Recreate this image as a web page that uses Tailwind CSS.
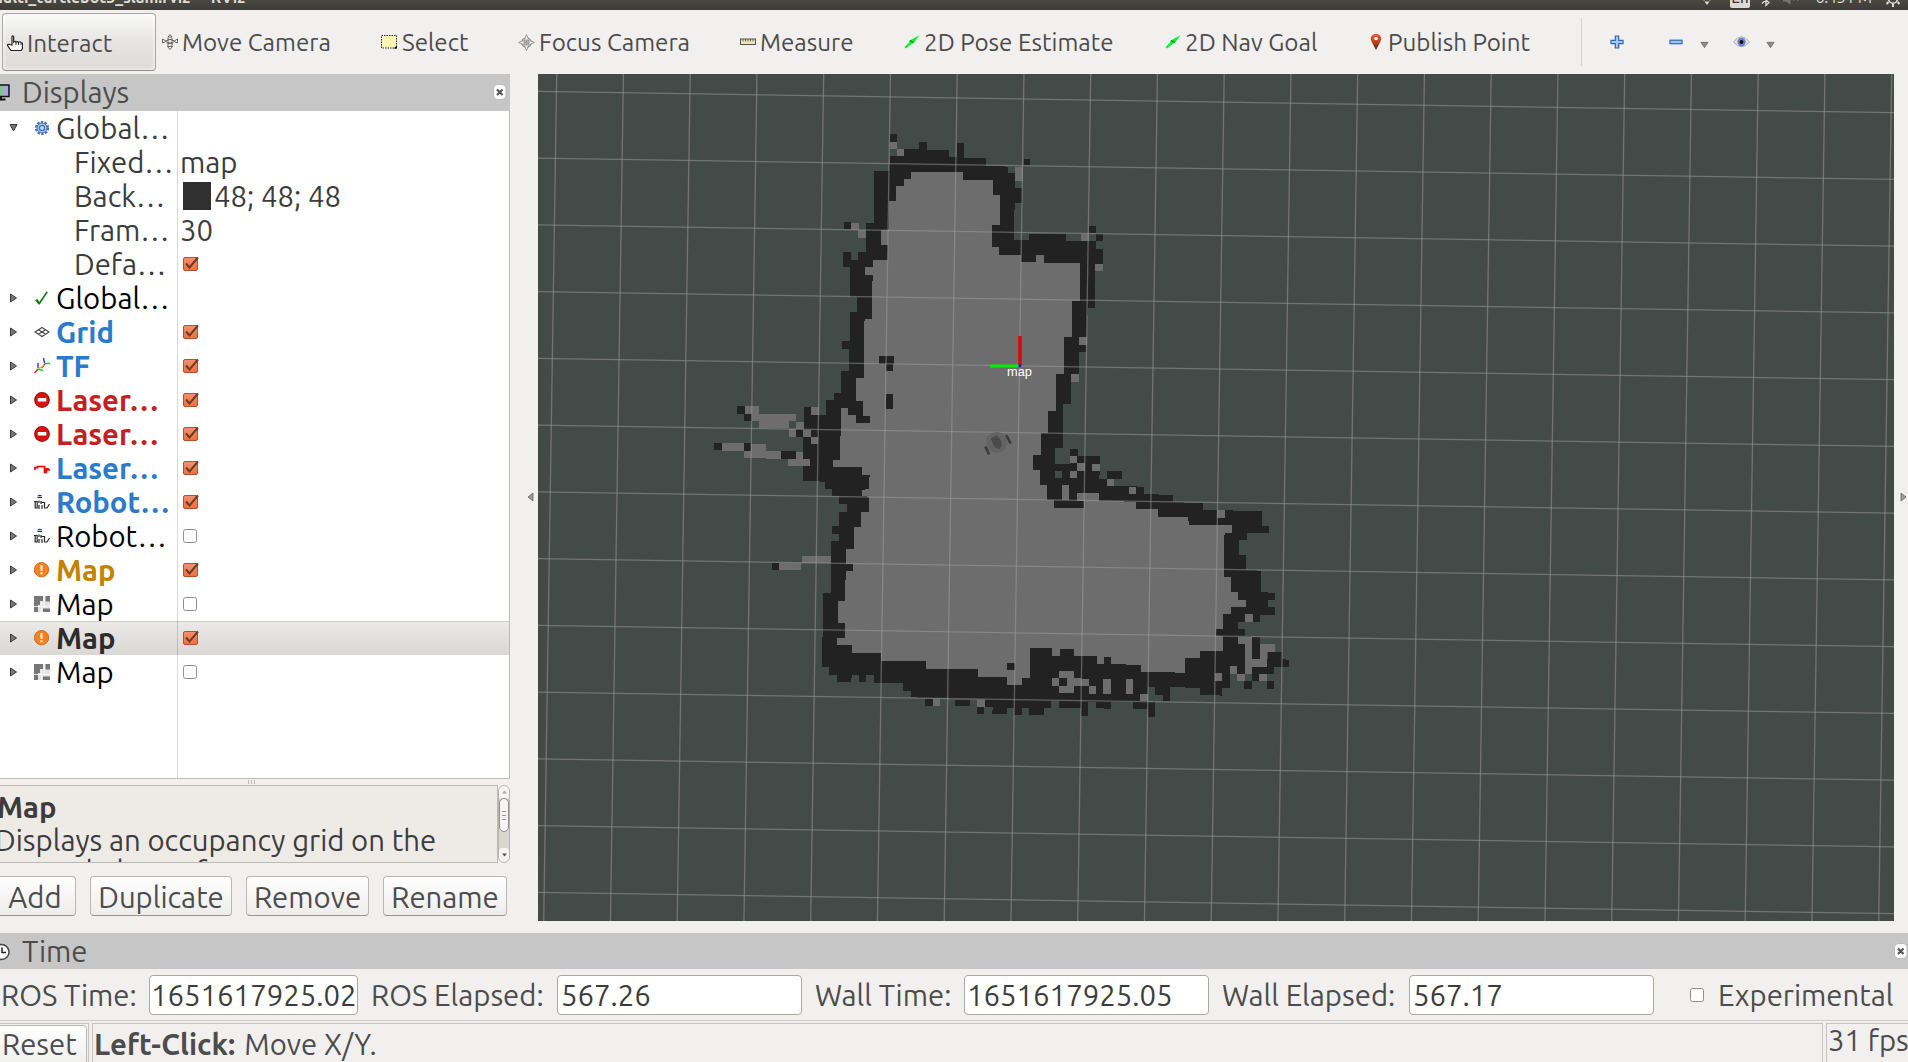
<!DOCTYPE html>
<html lang="en">
<head>
<meta charset="utf-8">
<title>RViz</title>
<script src="https://cdn.jsdelivr.net/npm/@tailwindcss/browser@4"></script>
</head>
<body class="w-[1908px] h-[1062px] overflow-hidden bg-[#f1f0ee] text-[#4c4c4c] font-['Ubuntu','Noto_Sans',sans-serif] text-[29.3px] whitespace-nowrap flex flex-col">

<svg class="absolute w-0 h-0" xmlns="http://www.w3.org/2000/svg">
  <linearGradient id="gCheck" x1="0" y1="0" x2="0" y2="1"><stop offset="0" stop-color="#f29273"/><stop offset="1" stop-color="#ee6f3c"/></linearGradient>
  <linearGradient id="gPin" x1="0" y1="0" x2="0" y2="1"><stop offset="0" stop-color="#f05a3c"/><stop offset="0.5" stop-color="#c4451c"/><stop offset="1" stop-color="#3a2412"/></linearGradient>
  <linearGradient id="gScreen" x1="0" y1="0" x2="1" y2="0"><stop offset="0.5" stop-color="#7fc97f"/><stop offset="0.8" stop-color="#a9a4ea"/></linearGradient>
  <symbol id="on" viewBox="0 0 16 16"><rect x="0.5" y="1.5" width="14" height="13" rx="1.5" fill="url(#gCheck)" stroke="#b5502c"/><path d="M3 7.5 6.5 11.5 15 1.5" fill="none" stroke="#6e3a28" stroke-width="2"/></symbol>
  <symbol id="off" viewBox="0 0 16 16"><rect x="0.5" y="1.5" width="13" height="13" rx="2" fill="#fff" stroke="#8f8f8f"/></symbol>
  <symbol id="gear" viewBox="0 0 16 16"><circle cx="8" cy="8" r="5.8" fill="none" stroke="#3f70b8" stroke-width="2.6" stroke-dasharray="2.3 1.35"/><circle cx="8" cy="8" r="5" fill="#b4cbea" stroke="#3f70b8"/><circle cx="8" cy="8" r="2.6" fill="none" stroke="#3f70b8" stroke-width="1.2"/><circle cx="8" cy="8" r="1" fill="#dfe9f6"/></symbol>
  <symbol id="tick" viewBox="0 0 16 16"><path d="M1 10 3.500 9l1.700 3L12.500 1.500 14 2 5.700 14.500H4.500Z" fill="#187a1c"/></symbol>
  <symbol id="grid" viewBox="0 0 16 16"><path d="M8 3.500 15 8l-7 4.500L1 8ZM4.500 5.800l7 4.500M11.500 5.800l-7 4.500" fill="none" stroke="#444" stroke-width="1.200"/></symbol>
  <symbol id="tf" viewBox="0 0 16 16"><path d="M4 11 0.500 15M11 6 7.500 10" stroke="#e02020" stroke-width="1.400"/><path d="M4 10V5M10.500 5 9.500 0" stroke="#3030e0" stroke-width="1.400"/><path d="M10.500 5.500H16M4 11l5 1.500" stroke="#10d820" stroke-width="1.400"/><path d="M5 10.500 10 7" stroke="#f0c020" stroke-width="1.400"/></symbol>
  <symbol id="err" viewBox="0 0 16 16"><circle cx="8" cy="8" r="7.900" fill="#8e0d0d"/><circle cx="8" cy="8" r="7" fill="#dc1010"/><rect x="3.800" y="6" width="8.500" height="3.600" rx="0.500" fill="#fff"/></symbol>
  <symbol id="laser" viewBox="0 0 16 16"><path d="M1 10V7.700H3.500V6.500H10.500V12.500H12.300V8.800H14V10H16" fill="none" stroke="#f00000" stroke-width="1.700"/></symbol>
  <symbol id="robot" viewBox="0 0 16 16"><path d="M3 2.200Q5.500-0.500 8.500 2.200Z" fill="#27388c"/><path d="M3.500 3.500H8M1.200 8V14M3.200 7V14.500M5 6.500V9M5 11V15M7 7V10M8 11V15M7.500 8.500H10.500V14H13L15.500 10M0 7.500H3M0.500 14H3" fill="none" stroke="#2a2a2a" stroke-width="1.200"/></symbol>
  <symbol id="warn" viewBox="0 0 16 16"><circle cx="7.500" cy="7.700" r="7.200" fill="#f58220" stroke="#d2691a" stroke-width="0.900"/><rect x="6.400" y="3" width="2.200" height="5.800" fill="#ffe6c8"/><rect x="6.400" y="10.200" width="2.200" height="2.200" fill="#ffe6c8"/></symbol>
  <symbol id="mapi" viewBox="0 0 16 16"><path d="M0 0H16V16H0Z" fill="#e4e4e4"/><path d="M0 0H9V5H6V9H4V16H0ZM11.500 0H16V5.500H11.500ZM9 12.500H16V16H9Z" fill="#777"/><path d="M10.200 0V12M0 10.500H16M7.500 6V16" stroke="#fff" stroke-width="0.800"/></symbol>
  <symbol id="x" viewBox="0 0 14 16"><rect x="0.500" y="0.500" width="12.500" height="15" rx="4" fill="#fbfbfb" stroke="#aaa" stroke-width="0.700"/><path d="M4 5.500 9.500 11M9.500 5.500 4 11" stroke="#555" stroke-width="2.200"/></symbol>
  <symbol id="pose" viewBox="0 0 16 16"><path d="M0.500 13.300 5.500 8 5 7 15.500 1 9.500 9.500 8 9.500 2 14.500Z" fill="#00f52c"/><path d="M6 6.500 9.500 8.500" stroke="#1c7a20" stroke-width="1.200"/></symbol>
  <symbol id="down" viewBox="0 0 10 8"><path d="M1 1H9L5 7Z" fill="#8c8c8c" stroke="#666" stroke-width="0.800"/></symbol>
</svg>

<!-- title bar -->
<header class="h-[10px] shrink-0 overflow-hidden bg-linear-to-b from-[#4a4842] to-[#3c3b37] text-[#dfdbd2] flex justify-between">
  <div class="text-[16px] font-bold leading-[20px] -mt-[13px] -ml-[11px]">multi_turtlebot3_slam.rviz* - RViz</div>
  <div class="flex items-start h-[10px] pr-[7px]">
    <svg class="w-[14px] h-[10px] mr-[16px]" viewBox="0 0 14 10"><path d="M1-3Q7-6 13-3M3.500 0Q7-2 10.500 0" stroke="#dfdbd2" fill="none" stroke-width="1.500"/><path d="M4.500 1.500 7 5 9.500 1.500Z" fill="#dfdbd2"/></svg>
    <div class="w-[20px] h-[18px] -mt-[10px] rounded-[2px] bg-[#dfdbd2] text-[#3c3b37] text-[15px] font-medium leading-[16px] text-center">En</div>
    <svg class="w-[10px] h-[10px] ml-[11px]" viewBox="0 0 10 10"><path d="M1 3.500 8-3M1-3 8 2.500 5 5.500V-8" stroke="#dfdbd2" fill="none" stroke-width="1.300"/></svg>
    <svg class="w-[16px] h-[10px] ml-[12px]" viewBox="0 0 16 10"><path d="M0-4H3L7-8V4L3 1H0ZM9-2l2 3M13-2l2 3" fill="#77756e" stroke="#77756e"/></svg>
    <div class="text-[16px] leading-[20px] -mt-[13px] ml-[16px] w-[57px] text-center tracking-[-0.300px]">6:45 PM</div>
    <svg class="w-[16px] h-[10px] ml-[13px]" viewBox="0 0 16 10"><circle cx="8" cy="-1" r="4.300" fill="none" stroke="#dfdbd2" stroke-width="1.600"/><path d="M8 3.500V7M3.500 2 1.500 4M12.500 2l2 2M13-1h2.500M0.500-1H3" stroke="#dfdbd2" stroke-width="2"/></svg>
  </div>
</header>

<!-- toolbar -->
<nav class="h-16 shrink-0 flex items-center text-[24.2px] leading-[64px]">
  <div class="ml-[2px] w-[154px] h-[58px] rounded-[4px] border border-[#a9a7a2] border-b-[#8f8d88] bg-linear-to-b from-[#fafafa] via-[#e6e5e3] to-[#dddbd8] flex items-center pl-[4px] gap-[4px] shadow-[inset_0_0_4px_#fff]">
    <svg class="w-4 h-[18px] mb-[-1px]" viewBox="0 0 16 18"><path d="M5 11V2.500Q5.500 1 6.700 2.500V8Q8 6.500 9 8 10.500 7 11.500 8.500 13 7 14 8.500 15.500 8.500 15.500 10V14Q15 16 14 16.500H4Q2.500 14.500 0.500 11.500 0.500 9.800 3 10.500Z" fill="#fff" stroke="#222" stroke-width="1.200"/><path d="M9 8v3M11.500 8.500V11M14 9v2" stroke="#222"/></svg>
    <span class="pt-[2px]">Interact</span>
  </div>
  <div class="ml-[6px] w-[219px] flex items-center gap-[4px]"><svg class="w-4 h-4" viewBox="0 0 16 16"><path d="M8 0.500 10 3H6ZM8 15.500 5.500 12.500H10.500ZM0.500 7V5L3 6.500M15.500 7V5L13 6.500M0.500 7V9L3 8M15.500 7V9L13 8M3 7Q8 4 13 7Q8 11 3 7ZM6 3.500V12M10 3.500V12M6 5.500H10M5.500 9.500H10.500" fill="#fff" stroke="#666" stroke-width="1"/></svg>Move Camera</div>
  <div class="w-[137px] flex items-center gap-[5px]"><svg class="w-4 h-4" viewBox="0 0 16 16"><rect x="0.500" y="1.500" width="15" height="12.500" fill="#fbf6b4" stroke="#333" stroke-dasharray="1.500 1"/><path d="M12.500 14.500H16V11.500Z" fill="#000"/></svg>Select</div>
  <div class="w-[222px] flex items-center gap-[4px]"><svg class="w-[17px] h-[17px]" viewBox="0 0 16 16"><circle cx="8" cy="8" r="4.500" fill="#e2e2e2" stroke="#888"/><path d="M8 0.500 9.500 4V12L8 15.500 6.500 12V4ZM0.500 8 4 6.500H12L15.500 8 12 9.500H4Z" fill="#f0f0f0" stroke="#8a8a8a" stroke-width="0.800"/><path d="M8 5v6M5 8h6" stroke="#999" stroke-width="0.800"/></svg>Focus Camera</div>
  <div class="w-[164px] flex items-center gap-[4px]"><svg class="w-4 h-4" viewBox="0 0 16 16"><rect x="0.500" y="5" width="15" height="5.500" fill="#ece5b5" stroke="#555"/><path d="M3 5v2.500M5.500 5v2.500M8 5v2.500M10.500 5v2.500M13 5v2.500" stroke="#555" stroke-width="0.900"/></svg>Measure</div>
  <div class="w-[261px] flex items-center gap-[4px]"><svg class="w-4 h-4"><use href="#pose"/></svg>2D Pose Estimate</div>
  <div class="w-[203px] flex items-center gap-[4px]"><svg class="w-4 h-4"><use href="#pose"/></svg>2D Nav Goal</div>
  <div class="w-[213px] flex items-center gap-[4px]"><svg class="w-4 h-[18px]" viewBox="0 0 16 18"><path d="M8 17 3.500 8.500Q1.500 4 4.500 2 8-0.500 11.500 2 14.500 4 12.500 8.500Z" fill="url(#gPin)"/><circle cx="8" cy="5.500" r="1.800" fill="#fff"/></svg>Publish Point</div>
  <div class="w-px h-12 bg-[#d6d4d1]"></div>
  <svg class="w-[14px] h-[14px] ml-[28px]" viewBox="0 0 14 14"><path d="M5.300 1H8.700V5.300H13V8.700H8.700V13H5.300V8.700H1V5.300H5.300Z" fill="#a9c6ea" stroke="#2f66b0" stroke-width="1.200"/></svg>
  <svg class="w-[14px] h-[14px] ml-[45px]" viewBox="0 0 14 14"><rect x="1" y="5.200" width="12" height="3.500" fill="#a9c6ea" stroke="#2f66b0" stroke-width="1.200"/></svg>
  <svg class="w-[9px] h-[8px] ml-[17px] mt-[6px]"><use href="#down"/></svg>
  <svg class="w-[17px] h-[14px] ml-[24px]" viewBox="0 0 17 14"><path d="M0.500 7Q8.500-3.500 16.500 7 8.500 16.500 0.500 7Z" fill="#e6e3e0" stroke="#aaa"/><circle cx="8.500" cy="7" r="4.200" fill="#6a7fc8"/><circle cx="8.500" cy="7" r="1.900" fill="#111"/></svg>
  <svg class="w-[9px] h-[8px] ml-[16px] mt-[6px]"><use href="#down"/></svg>
</nav>

<main class="h-[859px] shrink-0 flex">
  <!-- displays panel -->
  <section class="w-[510px] flex flex-col">
    <div class="h-[37px] bg-[#c6c6c6] flex leading-[37px]">
      <svg class="w-[10px] h-[18px] mt-[10px]" viewBox="0 0 10 18"><rect x="-8" y="1" width="17" height="11.500" fill="url(#gScreen)" stroke="#111" stroke-width="1.500"/><path d="M1 12.500V15M-3 15.500H5.500" stroke="#111" stroke-width="1.800"/></svg>
      <span class="ml-[12px]">Displays</span>
      <svg class="w-[14px] h-4 ml-auto mr-[3px] mt-[10px]"><use href="#x"/></svg>
    </div>
    <div class="h-[668px] bg-white border-r border-b border-[#bcbab4] relative">
      <div id="tree"></div>
      <div class="absolute left-[177px] top-0 w-px h-full bg-black/15"></div>
    </div>
    <div class="h-[6px] flex justify-center gap-[2px] pt-px pr-[8px]"><i class="w-px h-[4px] bg-[#bbb]"></i><i class="w-px h-[4px] bg-[#bbb]"></i><i class="w-px h-[4px] bg-[#bbb]"></i></div>
    <div class="h-[78px] flex">
      <div class="w-[498px] h-[78px] overflow-hidden bg-[#eeebe7] border border-l-0 border-[#bcbab4] pt-[5px] leading-[33px] text-[#3c3c3c]">
        <div class="font-bold -ml-[3px]">Map</div>
        <div class="-ml-[5px]">Displays an occupancy grid on the</div>
        <div class="-mt-[2px] -ml-[3px]">ground plane of a map.</div>
      </div>
      <div class="w-[12px] h-[78px] rounded-[6px] border border-[#b9b6b0] bg-[#d9d6d2] flex flex-col overflow-hidden">
        <div class="h-[12px] bg-[#f6f5f4] flex items-center justify-center"><svg class="w-[5px] h-[4px]" viewBox="0 0 5 4"><path d="M0 3.500 2.500 0.500 5 3.500Z" fill="#aaa"/></svg></div>
        <div class="h-[34px] rounded-[5px] border border-[#8f8d88] bg-[#f6f5f4] flex flex-col items-center justify-center gap-[3px]"><i class="w-[4px] h-px bg-[#999]"></i><i class="w-[4px] h-px bg-[#999]"></i><i class="w-[4px] h-px bg-[#999]"></i></div>
        <div class="h-[14px] mt-auto rounded-t-[3px] bg-[#f6f5f4] flex items-center justify-center"><svg class="w-[5px] h-[4px]" viewBox="0 0 5 4"><path d="M0 0.500 2.500 3.500 5 0.500Z" fill="#555"/></svg></div>
      </div>
    </div>
    <div class="mt-[13px] h-10 flex leading-[38px] text-center">
      <button class="-ml-[6px] w-[82px] h-10 pt-[2px] rounded-[4px] border border-[#b9b7b2] border-b-[#97958f] bg-linear-to-b from-white to-[#ededec]">Add</button>
      <button class="ml-[14px] w-[142px] h-10 pt-[2px] rounded-[4px] border border-[#b9b7b2] border-b-[#97958f] bg-linear-to-b from-white to-[#ededec]">Duplicate</button>
      <button class="ml-[14px] w-[123px] h-10 pt-[2px] rounded-[4px] border border-[#b9b7b2] border-b-[#97958f] bg-linear-to-b from-white to-[#ededec]">Remove</button>
      <button class="ml-[14px] w-[124px] h-10 pt-[2px] rounded-[4px] border border-[#b9b7b2] border-b-[#97958f] bg-linear-to-b from-white to-[#ededec]">Rename</button>
    </div>
  </section>
  <div class="w-[28px] pt-[418px] pl-[17px]"><svg class="w-[7px] h-[10px]" viewBox="0 0 7 10"><path d="M6 1V9L1 5Z" fill="#999" stroke="#666" stroke-width="0.800"/></svg></div>
  <!-- 3D view -->
  <svg class="w-[1356px] h-[847px] block bg-[#434b49]" viewBox="538 74 1356 847">
    <g id="map" shape-rendering="crispEdges"></g>
    <g id="lines" stroke="#a0a0a0" stroke-opacity="0.500" stroke-width="1.300"></g>
    <g transform="translate(996.700 442.500)" fill="#636363"><circle r="10.500"/><path d="M-6-4 0-7Q5-3 5 3L3 6.500-2 5Z" fill="#4a4a4a"/><path d="M9.500-7.500 14 1M-11.500 4-7.500 12" stroke="#3a3a3a" stroke-width="2.600"/></g>
    <path d="M1020 336V366" stroke="#e60000" stroke-width="3.400"/><path d="M990 366H1019" stroke="#00f000" stroke-width="3"/><path d="M1018.500 366H1021" stroke="#1010ff" stroke-width="2.600"/>
    <text x="1019.500" y="376" text-anchor="middle" fill="#fff" font-size="12.800" font-family="Liberation Sans, sans-serif">map</text>
  </svg>
  <div class="w-[14px] pt-[418px] pl-[6px]"><svg class="w-[7px] h-[10px]" viewBox="0 0 7 10"><path d="M1 1V9L6 5Z" fill="#999" stroke="#666" stroke-width="0.800"/></svg></div>
</main>

<!-- time panel -->
<div class="h-9 shrink-0 bg-[#c6c6c6] flex items-center leading-[34px]">
  <svg class="w-[10px] h-[18px] mt-[2px]" viewBox="0 0 10 18"><circle cx="1.500" cy="9" r="7.500" fill="#fff" stroke="#444" stroke-width="1.500"/><path d="M2 4.500V9.500H6" fill="none" stroke="#222" stroke-width="1.500"/></svg>
  <span class="ml-[12px] pt-[2px]">Time</span>
  <svg class="w-[14px] h-4 ml-auto"><use href="#x"/></svg>
</div>
<div class="h-[52px] shrink-0 flex items-center leading-[50px] border-b border-[#cfcdca]">
  <span class="w-[149px] pt-[2px] pl-px">ROS Time:</span>
  <div class="w-[209px] h-10 leading-[40px] rounded-[4px] border border-[#aaa8a3] bg-white text-[#3c3c3c] pl-px">1651617925.02</div>
  <span class="ml-[12px] w-[187px] pt-[2px] pl-px">ROS Elapsed:</span>
  <div class="w-[245px] h-10 leading-[40px] rounded-[4px] border border-[#aaa8a3] bg-white text-[#3c3c3c] pl-[3px]">567.26</div>
  <span class="ml-[13px] w-[149px] pt-[2px]">Wall Time:</span>
  <div class="w-[245px] h-10 leading-[40px] rounded-[4px] border border-[#aaa8a3] bg-white text-[#3c3c3c] pl-[2px]">1651617925.05</div>
  <span class="ml-[13px] w-[187px] pt-[2px]">Wall Elapsed:</span>
  <div class="w-[245px] h-10 leading-[40px] rounded-[4px] border border-[#aaa8a3] bg-white text-[#3c3c3c] pl-[3px]">567.17</div>
  <svg class="w-4 h-4 ml-[36px]"><use href="#off"/></svg>
  <span class="ml-[12px] pt-[2px]">Experimental</span>
</div>

<!-- status bar -->
<footer class="h-[41px] shrink-0 flex pt-[2px] overflow-hidden">
  <div class="w-[89px] shrink-0 h-[44px] border-t border-r border-[#c6c4c1] pt-px">
    <div class="-ml-[6px] w-[93px] h-[44px] rounded-[4px] border border-[#b9b7b2] bg-linear-to-b from-white to-[#ededec] pl-[7px] leading-[37px]">Reset</div>
  </div>
  <div class="ml-[3px] w-[1731px] shrink-0 h-[44px] border border-[#c6c4c1] pl-px leading-[41px]"><b>Left-Click:</b><span class="ml-[9px]">Move X/Y.</span></div>
  <div class="ml-[3px] w-[90px] shrink-0 h-[44px] border border-[#c6c4c1] pl-px leading-[34px]">31 fps</div>
</footer>

<script>
// [expanded, icon, label, label classes, value]
const BLUE = 'font-bold text-[#2a7bc9]', RED = 'font-bold text-[#c42020]', PLAIN = 'text-black';
const rows = [
  ['v', 'gear', 'Global…', 'text-[#3c3c3c]', ''],
  ['', '', 'Fixed…', '', 'map'],
  ['', '', 'Back…', '', '48; 48; 48'],
  ['', '', 'Fram…', '', '30'],
  ['', '', 'Defa…', '', 'on'],
  ['>', 'tick', 'Global…', PLAIN, ''],
  ['>', 'grid', 'Grid', BLUE, 'on'],
  ['>', 'tf', 'TF', BLUE, 'on'],
  ['>', 'err', 'Laser…', RED, 'on'],
  ['>', 'err', 'Laser…', RED, 'on'],
  ['>', 'laser', 'Laser…', BLUE, 'on'],
  ['>', 'robot', 'Robot…', BLUE, 'on'],
  ['>', 'robot', 'Robot…', PLAIN, 'off'],
  ['>', 'warn', 'Map', 'font-bold text-[#c48200]', 'on'],
  ['>', 'mapi', 'Map', PLAIN, 'off'],
  ['>', 'warn', 'Map', 'font-bold text-[#2c2c2c]', 'on'],
  ['>', 'mapi', 'Map', PLAIN, 'off'],
];
document.getElementById('tree').innerHTML = rows.map(([exp, icon, text, cls, val], i) => {
  const arrow = exp ? `<svg class="w-[10px] h-[10px] ml-[9px] shrink-0" viewBox="0 0 10 10"><path d="${exp === 'v' ? 'M1 1.500H8L4.500 8Z' : 'M1.500 1V9L7.500 5Z'}" fill="#777" stroke="#3a3a3a" stroke-width="1"/></svg>` : '';
  const ico = icon ? `<svg class="w-4 h-4 ml-[15px] mr-[6px] shrink-0"><use href="#${icon}"/></svg>` : '';
  const value = val === 'on' || val === 'off' ? `<svg class="w-4 h-4 ml-[5px]"><use href="#${val}"/></svg>`
    : i === 2 ? `<span class="w-7 h-7 ml-[5px] mr-[3px] bg-[#303030]"></span><span class="pt-[2px]">${val}</span>` : `<span class="ml-[2px] pt-[2px]">${val}</span>`;
  return `<div class="h-[34px] leading-[32px] flex ${i === 15 ? 'bg-linear-to-b from-[#ebeae8] to-[#dad8d5] shadow-[inset_0_1px_0_#cfcdca]' : ''}">
    <div class="w-[178px] flex items-center ${icon ? '' : 'pl-[74px] text-[#3c3c3c]'}">${arrow}${ico}<span class="pt-[2px] ${cls}">${text}</span></div>
    <div class="flex items-center text-[#3c3c3c]">${value}</div></div>`;
}).join('');

// occupancy map, drawn in thirds of a pixel, in three tiles with their own origin
const B = '#222222', G = '#6d6d6d', F = '#434b49';
const tiles = [
  { o: [700, 120],
    wall: '378,900 378,840 402,840 402,819 423,819 423,753 447,753 447,687 426,687 426,663 450,663 450,576 471,576 471,530 450,530 450,441 429,441 429,396 453,396 453,420 474,420 474,396 498,396 498,309 522,309 522,153 567,153 570,108 612,108 612,87 657,87 657,66 681,66 681,90 747,90 747,111 771,111 771,69 792,69 792,114 858,114 858,137 924,140 924,159 945,159 945,204 966,204 966,249 945,249 942,295 942,360 987,360 987,342 1098,342 1098,363 1188,363 1188,387 1209,387 1209,432 1185,432 1185,564 1163,564 1161,651 1158,696 1137,696 1137,762 1113,762 1113,852 1089,852 1089,903 378,903',
    free: '510,903 510,888 489,888 489,843 468,843 468,774 492,774 492,612 495,597 516,597 516,500 519,465 495,465 495,441 519,441 519,420 564,420 567,243 588,243 588,198 612,198 612,177 633,177 633,156 789,156 789,180 879,180 879,225 900,225 900,315 876,315 876,381 897,381 897,405 963,405 963,427 1140,429 1140,543 1116,543 1116,651 1092,651 1092,762 1068,762 1068,873 1044,873 1044,903',
    cells: [[G,[543,331,21,44],[1008,405,24,25],[570,66,21,21],[591,87,21,21],[945,140,24,43],[453,309,24,21],[474,331,24,23],[1143,342,24,21],[1185,432,24,21],[1137,651,24,23],[1113,762,24,23],[333,862,24,23],[135,858,42,24],[156,882,132,21],[423,864,21,39],[444,885,24,18]],
      [B,[570,42,21,24],[971,117,19,19],[432,307,21,21],[1167,318,21,21],[1188,342,21,21],[537,709,45,22],[558,731,21,22],[558,822,21,45],[111,858,24,24],[132,882,24,21],[312,862,21,24]]] },
  { o: [700, 390],
    wall: '423,60 402,60 402,30 378,30 378,75 312,75 312,140 309,140 309,273 375,275 375,297 396,297 396,318 417,318 417,342 441,342 441,366 417,366 417,408 396,408 396,432 417,432 417,453 393,453 393,609 369,609 369,741 366,741 366,831 387,831 387,855 411,855 411,876 453,876 456,855 477,855 477,876 498,876 498,855 522,855 522,879 609,879 609,903 633,903 633,922 831,928 855,928 855,950 879,950 876,972 921,972 921,950 945,950 945,974 963,974 966,953 987,953 987,975 1032,975 1032,174 1089,174 1089,42 1113,42 1113,20 423,20',
    free: '468,15 468,33 489,33 489,78 510,78 510,99 468,99 468,75 444,75 444,54 423,54 423,135 420,140 420,210 399,210 399,231 486,231 486,255 510,255 507,265 507,297 486,300 486,318 507,320 507,366 483,366 483,411 462,411 462,477 438,477 438,522 459,522 459,543 438,543 435,600 435,633 414,633 414,699 435,699 435,744 411,744 411,765 456,765 456,789 544,789 544,813 678,813 678,837 834,837 834,861 921,861 921,885 966,885 966,864 990,864 990,774 1032,774 1032,285 1020,285 1020,240 999,240 999,195 1023,195 1023,130 1044,130 1044,63 1068,63 1068,15',
    cells: [[G,[135,48,42,24],[156,72,132,22],[177,94,90,21],[288,96,24,22],[267,118,21,22],[309,120,24,20],[333,51,24,24],[333,140,21,22],[66,160,66,22],[153,162,45,22],[132,184,66,20],[198,184,45,23],[288,186,22,21],[264,207,66,21],[237,518,66,22],[306,497,87,21],[699,927,21,21],[831,929,24,22]],
      [B,[111,48,24,24],[132,72,24,21],[312,51,21,24],[288,118,21,22],[333,120,20,20],[42,159,24,21],[132,159,21,24],[243,184,45,22],[216,518,21,22],[675,927,24,21],[765,930,45,18],[831,951,21,21],[921,819,23,21],[558,12,21,45]]] },
  { o: [1000, 440],
    wall: '0,400 130,400 130,24 165,24 165,72 210,72 210,48 300,48 300,92 297,117 342,117 342,138 432,140 432,162 519,165 519,186 609,190 609,210 786,213 786,258 807,258 807,279 741,279 741,300 717,300 717,345 738,345 738,390 783,392 783,456 825,459 825,480 804,480 804,501 825,501 825,525 780,525 780,546 714,546 714,567 735,567 735,588 780,592 780,657 804,657 804,636 846,636 846,657 867,660 867,681 822,681 822,702 778,702 778,723 756,723 756,702 690,702 690,744 666,744 666,768 654,765 600,765 600,744 510,741 510,783 489,783 489,765 465,765 465,741 445,741 445,787 465,787 465,831 444,831 444,807 399,807 399,787 333,787 333,807 288,804 288,787 264,787 264,828 243,828 243,804 177,804 177,783 153,783 153,804 132,804 132,825 87,825 87,804 66,804 66,824 42,824 42,804 21,804 21,822 0,822',
    free: '0,400 0,180 99,180 99,90 120,90 120,135 141,135 141,180 162,180 162,204 252,204 252,183 408,185 408,207 474,207 474,231 564,231 567,255 696,255 696,279 675,279 672,290 672,411 693,411 693,456 714,456 714,480 738,480 738,501 693,501 693,522 669,522 669,567 648,567 648,588 669,588 669,633 600,633 600,654 555,654 555,698 423,696 423,675 333,672 333,651 312,651 312,672 291,672 291,648 222,648 222,627 180,627 180,648 156,648 156,624 90,624 90,714 66,714 66,735 21,735 21,711 0,711',
    cells: [[F,[165,92,21,22]],[G,[210,48,21,21],[231,69,24,23],[276,72,24,21],[210,93,21,21],[321,117,21,21],[387,140,21,22],[186,136,22,44],[232,159,65,24],[652,210,23,23],[735,522,24,24],[714,590,45,21],[735,611,21,90],[780,612,45,24],[780,636,22,44],[756,657,30,24],[690,678,21,24],[711,702,24,21],[778,702,22,21],[645,699,20,24],[156,714,21,24],[177,693,45,66],[222,714,22,24],[244,717,23,21],[267,738,21,24],[310,717,22,45],[378,717,21,45],[420,762,24,22]],
      [B,[210,27,24,21],[321,93,45,24],[177,714,24,24],[21,669,22,21],[756,592,24,65],[733,723,22,24],[801,723,21,24]]] },
];
const group = (t, body) => `<g transform="translate(${t.o[0]} ${t.o[1]}) scale(0.33333)">${body}</g>`;
document.getElementById('map').innerHTML =
  tiles.map(t => group(t, `<polygon fill="${B}" points="${t.wall}"/>`)).join('') +
  tiles.map(t => group(t, `<polygon fill="${G}" points="${t.free}"/>`)).join('') +
  tiles.map(t => group(t, t.cells.map(([c, ...rs]) => rs.map(([x, y, w, h]) => `<rect x="${x}" y="${y}" width="${w}" height="${h}" fill="${c}"/>`).join('')).join(''))).join('');

let lines = '';
for (let k = 0; k <= 20; k++) { const x = 556.7 + 66.75 * k; lines += `<path d="M${x} 74L${x - 13} 921"/>`; }
for (let k = -1; k <= 12; k++) { const y = 91.3 + 66.75 * k; lines += `<path d="M538 ${y}L1894 ${y + 21.4}"/>`; }
document.getElementById('lines').innerHTML = lines;
</script>
</body>
</html>
